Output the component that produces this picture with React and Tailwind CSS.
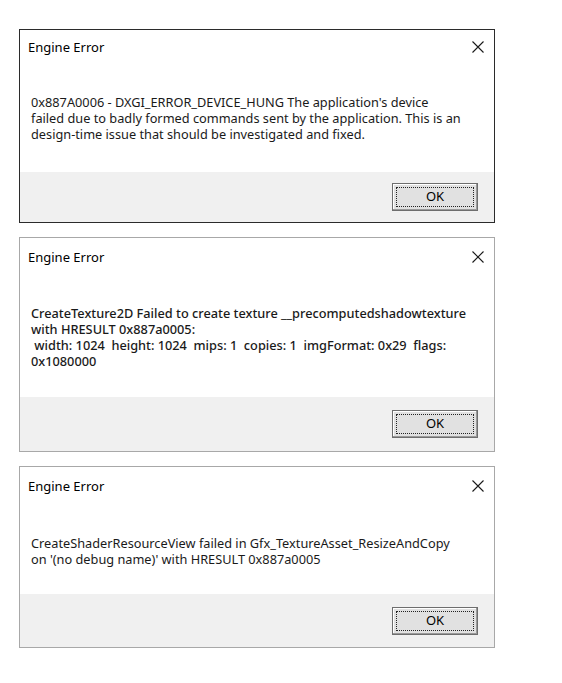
import React from 'react';

// Windows-style "Engine Error" message boxes, stacked
const dialogs = [
    {
        id: 1,
        frame: 'border-[#2b2b2b]',
        bodyHeight: 'h-[142px]',
        titlePad: 'pt-[8px]',
        textGap: 'mt-[38px]',
        footerHeight: 'h-[50px]',
        bold: false,
        lines: [
            "0x887A0006 - DXGI_ERROR_DEVICE_HUNG The application's device",
            'failed due to badly formed commands sent by the application. This is an',
            'design-time issue that should be investigated and fixed.',
        ],
    },
    {
        id: 2,
        frame: 'border-[#a8a8a8]',
        bodyHeight: 'h-[159px]',
        titlePad: 'pt-[10px]',
        textGap: 'mt-[39px]',
        footerHeight: 'h-[54px]',
        bold: true,
        lines: [
            'CreateTexture2D Failed to create texture __precomputedshadowtexture',
            'with HRESULT 0x887a0005:',
            '\u00a0width: 1024\u00a0 height: 1024\u00a0 mips: 1\u00a0 copies: 1\u00a0 imgFormat: 0x29\u00a0 flags:',
            '0x1080000',
        ],
    },
    {
        id: 3,
        frame: 'border-[#a8a8a8]',
        bodyHeight: 'h-[127px]',
        titlePad: 'pt-[10px]',
        textGap: 'mt-[40px]',
        footerHeight: 'h-[53px]',
        bold: false,
        lines: [
            'CreateShaderResourceView failed in Gfx_TextureAsset_ResizeAndCopy',
            "on '(no debug name)' with HRESULT 0x887a0005",
        ],
    },
];

const CloseIcon = () => (
    <svg width="12" height="12" viewBox="0 0 12 12" className="block">
        <path d="M0.5 0.5 L11.5 11.5 M11.5 0.5 L0.5 11.5" stroke="#1a1a1a" strokeWidth="1.1" fill="none" />
    </svg>
);

const OkButton = () => (
    <div className="w-[86px] h-[28px] border border-[#6e6e6e] bg-[#e1e1e1] shadow-[inset_-1px_-1px_0_#9a9a9a,inset_1px_1px_0_#ffffff] p-[3px]">
        <div className="w-full h-full border border-dotted border-[#222] flex items-center justify-center text-[13px] text-black">
            OK
        </div>
    </div>
);

const Dialog = ({ dialog }) => (
    <div className={`w-[476px] border bg-white ${dialog.frame}`}>
        <div className={`${dialog.bodyHeight} flex flex-col px-[8px]`}>
            <div className={`flex items-center justify-between h-[18px] box-content pr-[2px] ${dialog.titlePad}`}>
                <span className="text-[13px] leading-[18px] text-black">Engine Error</span>
                <CloseIcon />
            </div>
            <div className={`${dialog.textGap} pl-[3px] text-[12.75px] leading-[16px] text-[#1a1a1a] ${dialog.bold ? 'font-medium' : ''}`}>
                {dialog.lines.map((line, i) => (
                    <div key={i} className="whitespace-pre">{line}</div>
                ))}
            </div>
        </div>
        <div className={`${dialog.footerHeight} bg-[#f0f0f0] flex items-center justify-end pr-[16px]`}>
            <OkButton />
        </div>
    </div>
);

export default function App() {
    return (
        <div className="w-[562px] h-[683px] bg-white pt-[29px] pl-[19px] flex flex-col gap-[14px]" style={{ fontFamily: '"Noto Sans", "Open Sans", sans-serif' }}>
            {dialogs.map(d => (
                <Dialog key={d.id} dialog={d} />
            ))}
        </div>
    );
}
